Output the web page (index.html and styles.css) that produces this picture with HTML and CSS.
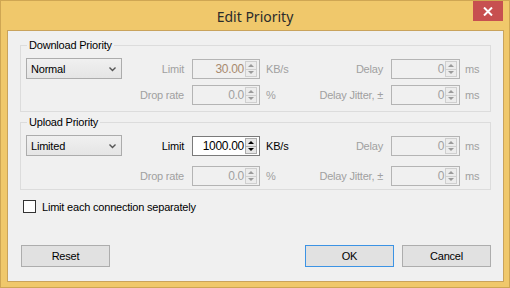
FILE: index.html
```html
<!DOCTYPE html>
<html lang="en">
<head>
  <meta charset="UTF-8" />
  <title>Edit Priority</title>
  <link rel="stylesheet" href="styles.css">
</head>
<body>
  <div class="window">
    <div class="titlebar">
      <span></span>
      <span class="title">Edit Priority</span>
      <button class="close" aria-label="Close">
        <svg width="10" height="9" viewBox="0 0 10 9"><path d="M1 0.5 L9 8.5 M9 0.5 L1 8.5" stroke="#fff" stroke-width="2"/></svg>
      </button>
    </div>

    <div class="client">
      <!-- download -->
      <div class="group group-down">
        <div class="group-title">Download Priority</div>
        <div class="group-grid">
          <div class="combo">Normal <svg class="chev" width="7" height="5" viewBox="0 0 7 5"><path d="M0.5 0.5 L3.5 3.5 L6.5 0.5" fill="none" stroke="#555" stroke-width="1.4"/></svg></div>
          <label class="lbl dis">Limit</label>
          <div class="spin dis"><span class="val tan">30.00</span><span class="btns"><i class="up"></i><i class="down"></i></span></div>
          <span class="unit dis">KB/s</span>
          <label class="lbl dis">Delay</label>
          <div class="spin dis"><span class="val">0</span><span class="btns"><i class="up"></i><i class="down"></i></span></div>
          <span class="unit ms dis">ms</span>

          <span></span>
          <label class="lbl dis">Drop rate</label>
          <div class="spin dis"><span class="val">0.0</span><span class="btns"><i class="up"></i><i class="down"></i></span></div>
          <span class="unit dis">%</span>
          <label class="lbl dis">Delay Jitter, ±</label>
          <div class="spin dis"><span class="val">0</span><span class="btns"><i class="up"></i><i class="down"></i></span></div>
          <span class="unit ms dis">ms</span>
        </div>
      </div>

      <!-- upload -->
      <div class="group group-up">
        <div class="group-title">Upload Priority</div>
        <div class="group-grid">
          <div class="combo">Limited <svg class="chev" width="7" height="5" viewBox="0 0 7 5"><path d="M0.5 0.5 L3.5 3.5 L6.5 0.5" fill="none" stroke="#555" stroke-width="1.4"/></svg></div>
          <label class="lbl">Limit</label>
          <div class="spin"><span class="val">1000.00</span><span class="btns"><i class="up"></i><i class="down"></i></span></div>
          <span class="unit">KB/s</span>
          <label class="lbl dis">Delay</label>
          <div class="spin dis"><span class="val">0</span><span class="btns"><i class="up"></i><i class="down"></i></span></div>
          <span class="unit ms dis">ms</span>

          <span></span>
          <label class="lbl dis">Drop rate</label>
          <div class="spin dis"><span class="val">0.0</span><span class="btns"><i class="up"></i><i class="down"></i></span></div>
          <span class="unit dis">%</span>
          <label class="lbl dis">Delay Jitter, ±</label>
          <div class="spin dis"><span class="val">0</span><span class="btns"><i class="up"></i><i class="down"></i></span></div>
          <span class="unit ms dis">ms</span>
        </div>
      </div>

      <label class="check-row"><span class="checkbox"></span>Limit each connection separately</label>

      <div class="footer">
        <button class="btn">Reset</button>
        <span class="spacer"></span>
        <button class="btn btn-default">OK</button>
        <button class="btn">Cancel</button>
      </div>
    </div>
  </div>
</body>
</html>
```

FILE: styles.css
```css
* {
  margin: 0;
  padding: 0;
  box-sizing: border-box;
}

body {
  font-family: 'Liberation Sans', Arial, sans-serif;
  font-size: 11px;
  letter-spacing: -0.2px;
  color: #000;
  background: #fff;
}

.window {
  width: 510px;
  height: 288px;
  background: #f0c86b;
  border: 1px solid #cfa653;
}

.titlebar {
  height: 29px;
  display: grid;
  grid-template-columns: 1fr auto 1fr;
}

.title {
  font-family: 'Noto Sans', sans-serif;
  font-size: 14px;
  letter-spacing: 0;
  color: #2b2b2b;
  line-height: 29px;
  padding-top: 1px;
}

.close {
  justify-self: end;
  width: 30px;
  height: 20px;
  margin-right: 6px;
  border: none;
  background: #c75050;
  display: flex;
  align-items: center;
  justify-content: center;
}

.client {
  margin: 0 5px 0 6px;
  height: 252px;
  border: 1px solid #c9a35c;
  background: #f0f0f0;
  padding: 14px 12px 0 12px;
}

.group {
  border: 1px solid #dcdcdc;
}

.group-title {
  margin: -7px 0 0 6px;
  padding: 0 2px;
  width: max-content;
  line-height: 13px;
  background: #f0f0f0;
}

.group-grid {
  display: grid;
  grid-template-columns: 96px 70px 68px 48px 83px 69px auto;
  grid-auto-rows: 20px;
  margin: 7px 0 0 5px;
}

.group-down .group-grid {
  row-gap: 6px;
  padding-bottom: 6px;
}

.group-up {
  margin-top: 10px;
}

.group-up .group-grid {
  row-gap: 10px;
  padding-bottom: 3px;
}

.combo {
  height: 21px;
  margin-top: -1px;
  border: 1px solid #acacac;
  background: linear-gradient(#f0f0f0, #e5e5e5);
  display: flex;
  align-items: center;
  justify-content: space-between;
  padding: 0 5px 0 4px;
}

.chev {
  margin-top: 1px;
}

.lbl {
  align-self: center;
  text-align: right;
  padding-right: 8px;
  white-space: nowrap;
}

.unit {
  align-self: center;
  padding-left: 6px;
}

.unit.ms {
  padding-left: 5px;
}

.dis {
  color: #a0a0a0;
}

.spin {
  display: flex;
  border: 1px solid #7a7a7a;
  background: #fff;
}

.spin.dis {
  border-color: #b4b4b4;
  background: #f0f0f0;
}

.val {
  flex: 1;
  text-align: right;
  line-height: 18px;
  padding-right: 1px;
  font-size: 12px;
  letter-spacing: -0.3px;
}

.tan {
  color: #a88a6e;
}

.btns {
  width: 14px;
  display: flex;
  flex-direction: column;
  padding: 1px 2px 1px 0;
}

.btns i {
  flex: 1;
  border: 1px solid #acacac;
  background: #e6e6e6;
  display: flex;
  align-items: center;
  justify-content: center;
}

.btns i + i {
  border-top: none;
}

.btns .up::after,
.btns .down::after {
  content: '';
  border-left: 3px solid transparent;
  border-right: 3px solid transparent;
}

.btns .up::after {
  border-bottom: 3px solid #000;
}

.btns .down::after {
  border-top: 3px solid #000;
}

.spin.dis .btns i {
  border-color: #cfcfcf;
  background: #ececec;
}

.spin.dis .up::after {
  border-bottom-color: #9a9a9a;
}

.spin.dis .down::after {
  border-top-color: #9a9a9a;
}

.check-row {
  display: flex;
  align-items: center;
  gap: 6px;
  margin: 10px 0 0 3px;
  height: 13px;
}

.checkbox {
  width: 13px;
  height: 13px;
  border: 1px solid #333;
  background: #fff;
}

.footer {
  display: flex;
  gap: 8px;
  margin: 32px 0 0 1px;
}

.spacer {
  flex: 1;
}

.btn {
  width: 89px;
  height: 22px;
  border: 1px solid #adadad;
  background: #e1e1e1;
  font-family: 'Liberation Sans', Arial, sans-serif;
  font-size: 11px;
  letter-spacing: -0.2px;
  color: #000;
}

.btn-default {
  border-color: #3c93e4;
}
```
